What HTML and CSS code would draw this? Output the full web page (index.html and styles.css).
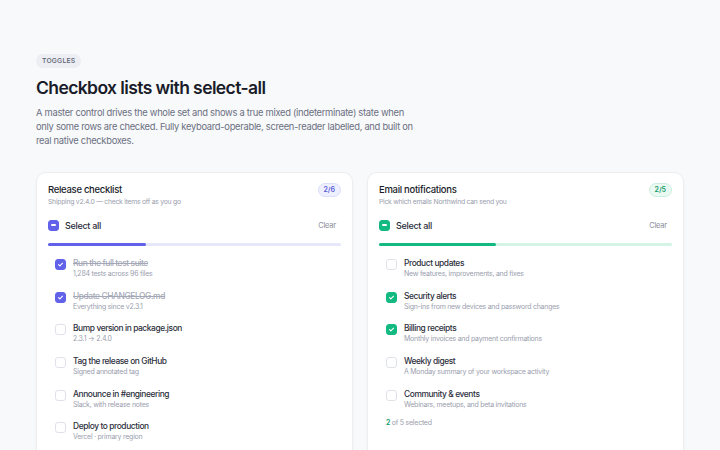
FILE: index.html
```html
<!DOCTYPE html>
<html lang="en">
<head>
<meta charset="UTF-8">
<title>Checkbox lists with select-all</title>
<link rel="stylesheet" href="styles.css">
</head>
<body>
<div class="page">
  <span class="eyebrow">TOGGLES</span>
  <h1>Checkbox lists with select-all</h1>
  <p class="lead">A master control drives the whole set and shows a true mixed (indeterminate) state when only some rows are checked. Fully keyboard-operable, screen-reader labelled, and built on real native checkboxes.</p>

  <div class="cards">
    <!-- release checklist -->
    <section class="card indigo">
      <div class="card-head">
        <div>
          <h2>Release checklist</h2>
          <div class="sub">Shipping v2.4.0 — check items off as you go</div>
        </div>
        <span class="count">2/6</span>
      </div>
      <div class="master">
        <span class="box mixed"></span>
        <span class="master-label">Select all</span>
        <span class="clear">Clear</span>
      </div>
      <div class="bar"><div class="fill" style="width:33.3%"></div></div>
      <ul class="items">
        <li class="item done">
          <span class="box on"><svg viewBox="0 0 12 12"><path d="M3.4 6.2l1.8 1.7 3.5-3.6"/></svg></span>
          <div><div class="name">Run the full test suite</div><div class="note">1,284 tests across 96 files</div></div>
        </li>
        <li class="item done">
          <span class="box on"><svg viewBox="0 0 12 12"><path d="M3.4 6.2l1.8 1.7 3.5-3.6"/></svg></span>
          <div><div class="name">Update CHANGELOG.md</div><div class="note">Everything since v2.3.1</div></div>
        </li>
        <li class="item">
          <span class="box"></span>
          <div><div class="name">Bump version in package.json</div><div class="note">2.3.1 → 2.4.0</div></div>
        </li>
        <li class="item">
          <span class="box"></span>
          <div><div class="name">Tag the release on GitHub</div><div class="note">Signed annotated tag</div></div>
        </li>
        <li class="item">
          <span class="box"></span>
          <div><div class="name">Announce in #engineering</div><div class="note">Slack, with release notes</div></div>
        </li>
        <li class="item">
          <span class="box"></span>
          <div><div class="name">Deploy to production</div><div class="note">Vercel · primary region</div></div>
        </li>
      </ul>
    </section>

    <!-- email notifications -->
    <section class="card green">
      <div class="card-head">
        <div>
          <h2>Email notifications</h2>
          <div class="sub">Pick which emails Northwind can send you</div>
        </div>
        <span class="count">2/5</span>
      </div>
      <div class="master">
        <span class="box mixed"></span>
        <span class="master-label">Select all</span>
        <span class="clear">Clear</span>
      </div>
      <div class="bar"><div class="fill" style="width:40%"></div></div>
      <ul class="items">
        <li class="item">
          <span class="box"></span>
          <div><div class="name">Product updates</div><div class="note">New features, improvements, and fixes</div></div>
        </li>
        <li class="item">
          <span class="box on"><svg viewBox="0 0 12 12"><path d="M3.4 6.2l1.8 1.7 3.5-3.6"/></svg></span>
          <div><div class="name">Security alerts</div><div class="note">Sign-ins from new devices and password changes</div></div>
        </li>
        <li class="item">
          <span class="box on"><svg viewBox="0 0 12 12"><path d="M3.4 6.2l1.8 1.7 3.5-3.6"/></svg></span>
          <div><div class="name">Billing receipts</div><div class="note">Monthly invoices and payment confirmations</div></div>
        </li>
        <li class="item">
          <span class="box"></span>
          <div><div class="name">Weekly digest</div><div class="note">A Monday summary of your workspace activity</div></div>
        </li>
        <li class="item">
          <span class="box"></span>
          <div><div class="name">Community &amp; events</div><div class="note">Webinars, meetups, and beta invitations</div></div>
        </li>
      </ul>
      <div class="summary"><b>2</b> of 5 selected</div>
    </section>
  </div>
</div>
</body>
</html>
```
FILE: styles.css
```css
body{
  margin:0;
  background:#f8f9fb;
  font-family:Inter,"Noto Sans",sans-serif;
  color:#1a1c29;
}
.page{
  padding:54px 36px 0;
  max-width:648px;
}
/* header */
.eyebrow{
  display:block;
  width:max-content;
  background:#eceef3;
  color:#5b6072;
  font-size:6.8px;
  font-weight:500;
  letter-spacing:.2px;
  line-height:8px;
  padding:3px 6px;
  border-radius:8px;
}
h1{
  margin:9px 0 0;
  font-size:17.5px;
  font-weight:600;
  letter-spacing:-.6px;
  line-height:22px;
}
.lead{
  margin:7px 0 0;
  font-size:9.4px;
  letter-spacing:-.3px;
  line-height:14px;
  color:#6b7081;
  max-width:384px;
}
/* cards */
.cards{
  display:grid;
  grid-template-columns:1fr 1fr;
  gap:14px;
  margin-top:24px;
}
.card{
  background:#fff;
  border:1px solid #eceef2;
  border-radius:10px;
  box-shadow:0 1px 3px rgba(20,24,40,.04);
  padding:11px 11px 16px;
  min-height:300px;
}
.card-head{
  display:flex;
  justify-content:space-between;
  align-items:flex-start;
}
h2{
  margin:0;
  font-size:9.5px;
  font-weight:500;
  letter-spacing:-.3px;
  line-height:12px;
}
.sub{
  font-size:6.8px;
  letter-spacing:-.25px;
  line-height:10px;
  color:#9a9eae;
  margin-top:1px;
}
.count{
  font-size:7px;
  font-weight:600;
  line-height:10px;
  padding:1px 5px;
  border-radius:8px;
  margin-top:-1px;
}
.indigo .count{background:#eef0ff;border:1px solid #dcdffc;color:#5b5fd6;}
.green .count{background:#eafaf3;border:1px solid #cdeedf;color:#149a6a;}
/* master row */
.master{
  display:flex;
  align-items:center;
  margin-top:8px;
  height:20px;
}
.master-label{
  font-size:9px;
  font-weight:500;
  letter-spacing:-.3px;
  color:#2b2e3b;
  margin-left:6px;
  flex:1;
}
.clear{
  font-size:7.5px;
  letter-spacing:-.2px;
  color:#8a8e9c;
  margin-right:5px;
}
.box{
  width:11px;
  height:11px;
  border:1px solid #dfe2e8;
  border-radius:3px;
  background:#fff;
  display:flex;
  align-items:center;
  justify-content:center;
  flex:none;
  box-sizing:border-box;
}
.box svg{width:11px;height:11px;fill:none;stroke:#fff;stroke-width:1.4;stroke-linecap:round;stroke-linejoin:round;}
.indigo .box.on,.indigo .box.mixed{background:#6161e9;border-color:#6161e9;}
.green .box.on,.green .box.mixed{background:#12b981;border-color:#12b981;}
.box.mixed::after{
  content:"";
  width:5px;
  height:1.5px;
  background:#fff;
  border-radius:1px;
}
.bar{
  height:3px;
  border-radius:2px;
  margin-top:8px;
}
.fill{height:100%;border-radius:2px;}
.indigo .bar{background:#e6e7fb;}
.indigo .fill{background:#6161e9;}
.green .bar{background:#d4f5e6;}
.green .fill{background:#12b981;}
/* rows */
.items{
  list-style:none;
  margin:10px 0 0;
  padding:0 0 0 7px;
  display:flex;
  flex-direction:column;
  gap:9.7px;
}
.item{
  display:flex;
  gap:7px;
  align-items:flex-start;
  padding-top:1px;
}
.item .box{margin-top:2px;}
.name{
  font-size:8.4px;
  font-weight:500;
  letter-spacing:-.4px;
  color:#2b2e3b;
  line-height:12px;
}
.note{
  font-size:7px;
  letter-spacing:-.25px;
  color:#9a9eae;
  line-height:10px;
}
.item.done .name{
  color:#a4a8b6;
  text-decoration:line-through;
}
.summary{
  font-size:7px;
  letter-spacing:-.25px;
  line-height:10px;
  color:#9a9eae;
  margin-top:8px;
  padding-left:7px;
}
.summary b{color:#149a6a;font-weight:600;}
```
